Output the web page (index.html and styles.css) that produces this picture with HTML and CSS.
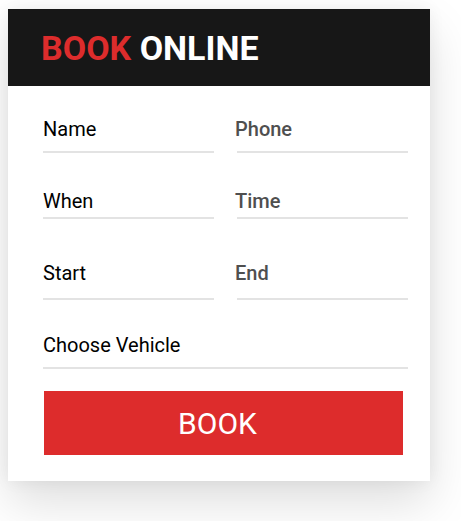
FILE: index.html
```html
<!DOCTYPE html>
<html>
<head>
<meta charset="utf-8">
<link rel="stylesheet" href="styles.css">
</head>
<body>
<div class="card">
  <div class="head"><span class="red">BOOK</span>&nbsp;ONLINE</div>
  <form class="form">
    <div class="row r1">
      <div class="field"><span class="label">Name</span></div>
      <div class="field"><span class="label ph">Phone</span></div>
    </div>
    <div class="row r2">
      <div class="field"><span class="label">When</span></div>
      <div class="field"><span class="label ph">Time</span></div>
    </div>
    <div class="row r3">
      <div class="field"><span class="label">Start</span></div>
      <div class="field"><span class="label ph">End</span></div>
    </div>
    <div class="row r4 single">
      <div class="field"><span class="label">Choose Vehicle</span></div>
    </div>
    <div class="btn">BOOK</div>
  </form>
</div>
</body>
</html>
```
FILE: styles.css
```css
html, body { margin: 0; padding: 0; background: #fff; }
body {
  padding: 9px 31px 40px 8px;
  font-family: Roboto, "Liberation Sans", sans-serif;
}
.card {
  width: 422px;
  background: #fff;
  box-shadow: 0 22px 45px rgba(0,0,0,0.13), 0 0 16px rgba(0,0,0,0.06);
}
.head {
  height: 77px;
  background: #171717;
  color: #fff;
  font-weight: 700;
  font-size: 34px;
  display: flex;
  align-items: center;
  padding-left: 33px;
  box-sizing: border-box;
}
.red { color: #dd2c2c; }
.form {
  padding: 32px 22px 26px 35px;
  margin: 0;
}
.row {
  display: grid;
  grid-template-columns: 171px 171px;
  column-gap: 23px;
}
.row.single { grid-template-columns: 365px; }
.field {
  border-bottom: 2px solid #e3e3e3;
  font-size: 20px;
  line-height: 22px;
}
.label { color: #000; font-weight: 400; }
.label.ph { color: #4f4f4f; margin-left: -2px; font-weight: 500; }
.r1 .field { padding-bottom: 11px; }
.r2 { margin-top: 37px; }
.r2 .field { padding-bottom: 5px; }
.r3 { margin-top: 43px; }
.r3 .field { padding-bottom: 14px; }
.r4 { margin-top: 34px; }
.r4 .field { padding-bottom: 11px; }
.btn {
  margin: 22px 5px 0 1px;
  height: 64px;
  padding-right: 12px;
  background: #dd2c2c;
  color: #fff;
  font-size: 30px;
  display: flex;
  align-items: center;
  justify-content: center;
}
```
